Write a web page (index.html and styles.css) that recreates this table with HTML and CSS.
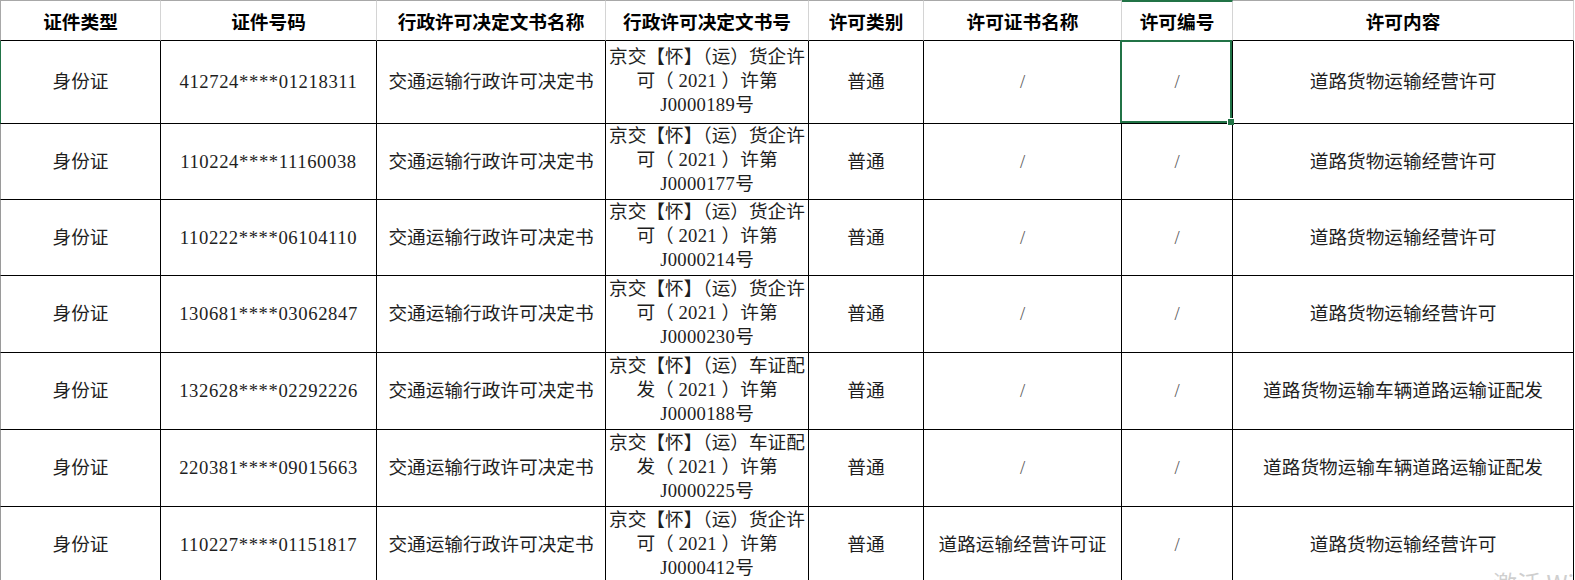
FILE: index.html
```html
<!DOCTYPE html>
<html lang="zh-CN">
<head>
<meta charset="utf-8">
<title>许可信息</title>
<link rel="stylesheet" href="styles.css">
</head>
<body>
<div class="sheet">
  <div class="h first">证件类型</div>
  <div class="h">证件号码</div>
  <div class="h">行政许可决定文书名称</div>
  <div class="h">行政许可决定文书号</div>
  <div class="h">许可类别</div>
  <div class="h">许可证书名称</div>
  <div class="h active-col">许可编号</div>
  <div class="h">许可内容</div>

  <div class="c first active-row">身份证</div>
  <div class="c"><span class="num">412724****01218311</span></div>
  <div class="c">交通运输行政许可决定书</div>
  <div class="c"><div class="doc">京交【怀】（运）货企许<br>可（ <span class="num">2021</span> ）许第<br><span class="num">J0000189</span>号</div></div>
  <div class="c">普通</div>
  <div class="c slash">/</div>
  <div class="c slash selected">/<span class="sel"></span></div>
  <div class="c">道路货物运输经营许可</div>

  <div class="c first">身份证</div>
  <div class="c"><span class="num">110224****11160038</span></div>
  <div class="c">交通运输行政许可决定书</div>
  <div class="c"><div class="doc">京交【怀】（运）货企许<br>可（ <span class="num">2021</span> ）许第<br><span class="num">J0000177</span>号</div></div>
  <div class="c">普通</div>
  <div class="c slash">/</div>
  <div class="c slash">/</div>
  <div class="c">道路货物运输经营许可</div>

  <div class="c first">身份证</div>
  <div class="c"><span class="num">110222****06104110</span></div>
  <div class="c">交通运输行政许可决定书</div>
  <div class="c"><div class="doc">京交【怀】（运）货企许<br>可（ <span class="num">2021</span> ）许第<br><span class="num">J0000214</span>号</div></div>
  <div class="c">普通</div>
  <div class="c slash">/</div>
  <div class="c slash">/</div>
  <div class="c">道路货物运输经营许可</div>

  <div class="c first">身份证</div>
  <div class="c"><span class="num">130681****03062847</span></div>
  <div class="c">交通运输行政许可决定书</div>
  <div class="c"><div class="doc">京交【怀】（运）货企许<br>可（ <span class="num">2021</span> ）许第<br><span class="num">J0000230</span>号</div></div>
  <div class="c">普通</div>
  <div class="c slash">/</div>
  <div class="c slash">/</div>
  <div class="c">道路货物运输经营许可</div>

  <div class="c first">身份证</div>
  <div class="c"><span class="num">132628****02292226</span></div>
  <div class="c">交通运输行政许可决定书</div>
  <div class="c"><div class="doc">京交【怀】（运）车证配<br>发（ <span class="num">2021</span> ）许第<br><span class="num">J0000188</span>号</div></div>
  <div class="c">普通</div>
  <div class="c slash">/</div>
  <div class="c slash">/</div>
  <div class="c">道路货物运输车辆道路运输证配发</div>

  <div class="c first">身份证</div>
  <div class="c"><span class="num">220381****09015663</span></div>
  <div class="c">交通运输行政许可决定书</div>
  <div class="c"><div class="doc">京交【怀】（运）车证配<br>发（ <span class="num">2021</span> ）许第<br><span class="num">J0000225</span>号</div></div>
  <div class="c">普通</div>
  <div class="c slash">/</div>
  <div class="c slash">/</div>
  <div class="c">道路货物运输车辆道路运输证配发</div>

  <div class="c first">身份证</div>
  <div class="c"><span class="num">110227****01151817</span></div>
  <div class="c">交通运输行政许可决定书</div>
  <div class="c"><div class="doc">京交【怀】（运）货企许<br>可（ <span class="num">2021</span> ）许第<br><span class="num">J0000412</span>号</div></div>
  <div class="c">普通</div>
  <div class="c">道路运输经营许可证</div>
  <div class="c slash">/</div>
  <div class="c">道路货物运输经营许可</div>
</div>
<div class="watermark">激活 Windows</div>
</body>
</html>
```

FILE: styles.css
```css
html, body {
  margin: 0;
  padding: 0;
  background: #ffffff;
  overflow: hidden;
}

body {
  width: 1575px;
  height: 580px;
  position: relative;
  font-family: "Liberation Serif", "Noto Sans CJK SC", serif;
  font-size: 18.67px;
  color: #1e1e1e;
}

.sheet {
  display: grid;
  grid-template-columns: 161px 216px 229px 203px 115px 198px 111px 341px;
  grid-template-rows: 41px 83px 76px 76px 77px 77px 77px 77px;
}

.h,
.c {
  box-sizing: border-box;
  display: flex;
  align-items: center;
  justify-content: center;
  text-align: center;
  white-space: nowrap;
}

.h {
  border-top: 1px solid #a8a8a8;
  border-right: 1px solid #d4d4d4;
  border-bottom: 1px solid #000000;
  font-weight: 700;
  color: #000000;
  padding-bottom: 1px;
}

.h.first {
  border-left: 1px solid #a8a8a8;
}

.h.active-col {
  border-top: 2px solid #217346;
}

.c {
  border-right: 1px solid #000000;
  border-bottom: 1px solid #000000;
  line-height: 24px;
}

.c.first {
  border-left: 1px solid #9a9a9a;
}

.c.first.active-row {
  border-left: 1px solid #217346;
}

.doc {
  text-align: center;
  line-height: 24px;
  margin-top: -3px;
}

.num {
  letter-spacing: 0.6px;
}

.doc .num {
  letter-spacing: 0.3px;
}

.slash {
  color: #5a5a5a;
}

.selected {
  position: relative;
}

.sel {
  position: absolute;
  left: -2px;
  top: -1px;
  right: 0;
  bottom: 0;
  border: 2px solid #217346;
  pointer-events: none;
}

.sel::after {
  content: "";
  position: absolute;
  right: -4px;
  bottom: -4px;
  width: 6px;
  height: 6px;
  background: #217346;
  border-left: 1px solid #ffffff;
  border-top: 1px solid #ffffff;
}

.watermark {
  position: absolute;
  left: 1493px;
  top: 571px;
  font-family: "Noto Sans CJK SC", sans-serif;
  font-size: 24px;
  line-height: 1;
  color: #cfcfcf;
  white-space: nowrap;
}
```
